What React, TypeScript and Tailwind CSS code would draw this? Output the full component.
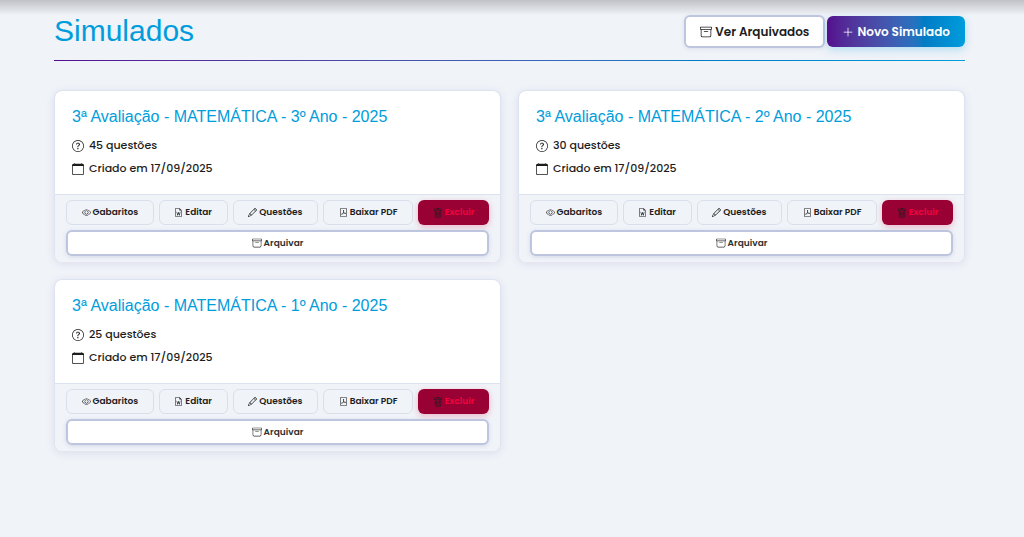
import {
  BsArchive,
  BsCalendar,
  BsEye,
  BsFileEarmarkWord,
  BsFilePdf,
  BsPencil,
  BsPlusLg,
  BsQuestionCircle,
  BsTrash,
} from "react-icons/bs";
import type { IconType } from "react-icons";

type Exam = { title: string; questions: number; created: string };

const exams: Exam[] = [
  { title: "3ª Avaliação - MATEMÁTICA - 3º Ano - 2025", questions: 45, created: "17/09/2025" },
  { title: "3ª Avaliação - MATEMÁTICA - 2º Ano - 2025", questions: 30, created: "17/09/2025" },
  { title: "3ª Avaliação - MATEMÁTICA - 1º Ano - 2025", questions: 25, created: "17/09/2025" },
];

const actions: { label: string; Icon: IconType }[] = [
  { label: "Gabaritos", Icon: BsEye },
  { label: "Editar", Icon: BsFileEarmarkWord },
  { label: "Questões", Icon: BsPencil },
  { label: "Baixar PDF", Icon: BsFilePdf },
];

function ExamCard({ exam }: { exam: Exam }) {
  return (
    <article className="overflow-hidden rounded-lg border border-b-0 border-[#dde3ef] bg-white shadow-[0_2px_8px_rgba(80,70,150,0.12)]">
      <div className="px-[17px] pt-[17px] pb-[14px]">
        <h2 className="font-['Liberation_Sans',sans-serif] text-[16px] leading-[18px] text-[#009ddc]">
          {exam.title}
        </h2>
        <p className="mt-2 flex items-center gap-[5px] text-[11px] leading-[23px] font-medium">
          <BsQuestionCircle className="size-3 shrink-0" />
          {exam.questions} questões
        </p>
        <p className="flex items-center gap-[5px] text-[11px] leading-[23px] font-medium">
          <BsCalendar className="size-3 shrink-0" />
          Criado em {exam.created}
        </p>
      </div>
      <div className="flex flex-col gap-[5px] border-t border-[#dae2ee] bg-[#f0f3f8] px-[11px] pt-[5px] pb-[6px]">
        <div className="flex gap-[5px]">
          {actions.map(({ label, Icon }) => (
            <button
              key={label}
              type="button"
              className="flex h-[25px] grow items-center justify-center gap-[2px] rounded-md border border-[#d9e0eb] px-3 text-[9px] leading-[15px] font-semibold whitespace-nowrap"
            >
              <Icon className="size-[9px] shrink-0" />
              {label}
            </button>
          ))}
          <button
            type="button"
            className="flex h-[25px] grow items-center justify-center gap-[2px] rounded-md bg-[#990033] px-3 text-[9px] leading-[15px] font-semibold whitespace-nowrap text-[#f5003d] shadow-[0_2px_6px_rgba(220,0,60,0.25)]"
          >
            <BsTrash className="size-[10px] shrink-0 text-[#1d1d1d]" />
            Excluir
          </button>
        </div>
        <button
          type="button"
          className="flex h-[26px] items-center justify-center gap-[2px] rounded-md border-2 border-[#bec5df] bg-white text-[9px] leading-4 font-semibold text-[#303030] shadow-[0_1px_4px_rgba(60,70,140,0.15)]"
        >
          <BsArchive className="size-[10px] shrink-0" />
          Arquivar
        </button>
      </div>
    </article>
  );
}

export default function App() {
  return (
    <div className="min-h-screen bg-[#f0f3f8] font-['Poppins','Inter',sans-serif] text-[#1d1d1d]">
      <div className="h-[15px] bg-linear-to-b from-[#bfc1c6] to-[#f0f3f8]" />
      <main className="pr-[59px] pl-[54px]">
        <header className="flex items-start justify-between pb-3">
          <h1 className="font-['Liberation_Sans',sans-serif] text-[30px] leading-8 text-[#009ddc]">
            Simulados
          </h1>
          <div className="flex items-center gap-[2px]">
            <button
              type="button"
              className="flex h-[33px] items-center justify-center gap-[3px] rounded-md border-2 border-[#bec5df] bg-white px-[14px] text-[12px] leading-[17px] font-semibold shadow-[0_1px_4px_rgba(60,70,140,0.12)]"
            >
              <BsArchive className="size-3 shrink-0" />
              Ver Arquivados
            </button>
            <button
              type="button"
              className="flex h-[31px] items-center justify-center gap-[3px] rounded-md bg-linear-to-r from-[#540d8e] via-[#007bc4] via-70% to-[#009ddc] px-[15px] text-[12px] leading-[17px] font-semibold text-white shadow-[0_3px_8px_rgba(0,157,220,0.25)]"
            >
              <BsPlusLg className="size-3 shrink-0" />
              Novo Simulado
            </button>
          </div>
        </header>
        <div className="h-px bg-linear-to-r from-[#540d8e] via-[#007bc4] via-70% to-[#009ddc]" />
        <section className="mt-[29px] grid grid-cols-1 gap-[17px] pb-8 sm:grid-cols-2">
          {exams.map((exam) => (
            <ExamCard key={exam.title} exam={exam} />
          ))}
        </section>
      </main>
    </div>
  );
}
